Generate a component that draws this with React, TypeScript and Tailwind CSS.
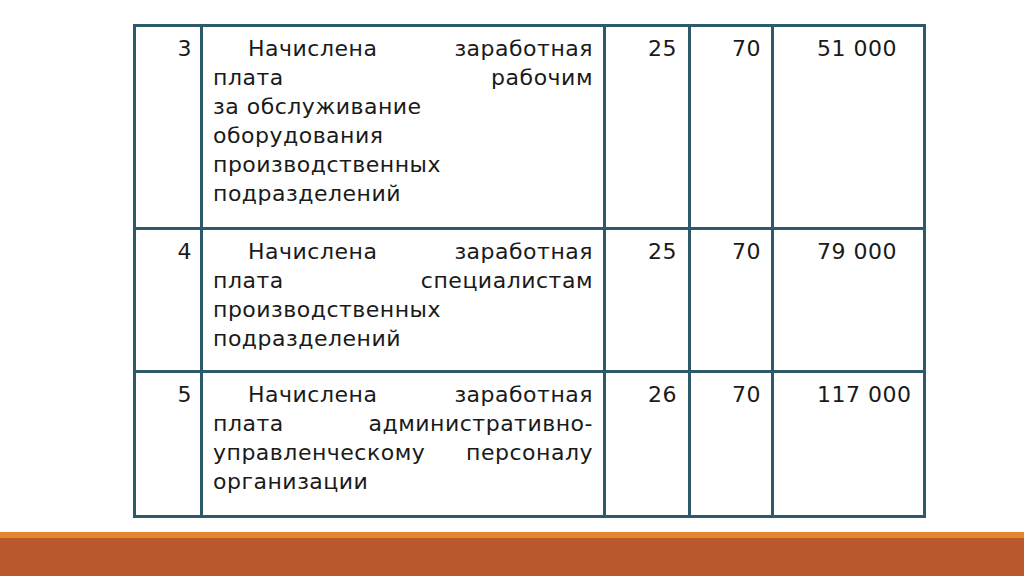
type Line = { text: string; justify?: boolean; indent?: boolean };

type Row = {
  no: string;
  lines: Line[];
  debit: string;
  credit: string;
  sum: string;
  height: string;
};

const rows: Row[] = [
  {
    no: "3",
    lines: [
      { text: "Начислена заработная", justify: true, indent: true },
      { text: "плата рабочим", justify: true },
      { text: "за обслуживание" },
      { text: "оборудования" },
      { text: "производственных" },
      { text: "подразделений" },
    ],
    debit: "25",
    credit: "70",
    sum: "51 000",
    height: "h-[203px]",
  },
  {
    no: "4",
    lines: [
      { text: "Начислена заработная", justify: true, indent: true },
      { text: "плата специалистам", justify: true },
      { text: "производственных" },
      { text: "подразделений" },
    ],
    debit: "25",
    credit: "70",
    sum: "79 000",
    height: "h-[143px]",
  },
  {
    no: "5",
    lines: [
      { text: "Начислена заработная", justify: true, indent: true },
      { text: "плата административно-", justify: true },
      { text: "управленческому персоналу", justify: true },
      { text: "организации" },
    ],
    debit: "26",
    credit: "70",
    sum: "117 000",
    height: "h-[145px]",
  },
];

const cell = "border-r-[3px] border-b-[3px] border-[#2d5a6a] pt-[7px]";

export default function App() {
  return (
    <div className="w-[1024px] h-[576px] bg-white flex flex-col overflow-hidden font-['DejaVu_Sans',Verdana,sans-serif] text-[22px] leading-[29px] tracking-[0.5px] text-[#1a1a1a]">
      <div className="flex-1">
        <div className="ml-[133px] mt-[24px] w-[793px] border-l-[3px] border-t-[3px] border-[#2d5a6a] grid grid-cols-[67px_403px_85px_83px_152px]">
          {rows.map((r) => (
            <div key={r.no} className="contents">
              <div className={`${cell} ${r.height} text-right pr-[8px]`}>{r.no}</div>
              <div className={`${cell} ${r.height} pl-[10px] pr-[10px]`}>
                {r.lines.map((l, i) => (
                  <div
                    key={i}
                    className={
                      l.justify
                        ? `text-justify [text-align-last:justify] ${l.indent ? "pl-[35px]" : ""}`
                        : ""
                    }
                  >
                    {l.text}
                  </div>
                ))}
              </div>
              <div className={`${cell} ${r.height} text-right pr-[11px]`}>{r.debit}</div>
              <div className={`${cell} ${r.height} text-right pr-[10px]`}>{r.credit}</div>
              <div className={`${cell} ${r.height} pl-[43px]`}>{r.sum}</div>
            </div>
          ))}
        </div>
      </div>
      <div className="h-[6px] bg-[#e3872f]" />
      <div className="h-[38px] bg-[#b9582b]" />
    </div>
  );
}
